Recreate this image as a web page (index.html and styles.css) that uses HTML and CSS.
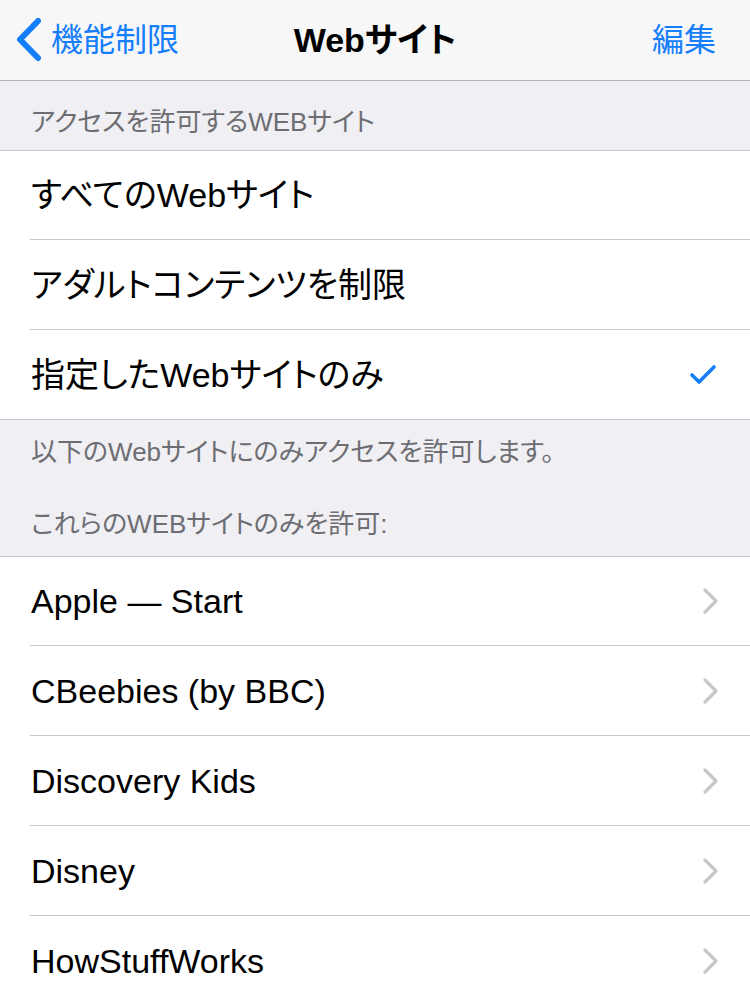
FILE: index.html
```html
<!DOCTYPE html>
<html lang="ja">
<head>
<meta charset="utf-8">
<link rel="stylesheet" href="styles.css">
</head>
<body>
<div class="screen">
  <header class="nav">
    <div class="nav-left">
      <svg class="back-icon" width="28" height="44" viewBox="0 0 28 44"><polyline points="23,3 5,21.5 23,40" fill="none" stroke="#157efb" stroke-width="6" stroke-linecap="round" stroke-linejoin="round"/></svg>
      <span class="nav-link">機能制限</span>
    </div>
    <div class="nav-title">Webサイト</div>
    <div class="nav-right"><span class="nav-link">編集</span></div>
  </header>

  <div class="section-header">アクセスを許可するWEBサイト</div>
  <ul class="group">
    <li class="row row-first"><span class="label">すべてのWebサイト</span></li>
    <li class="row"><span class="label">アダルトコンテンツを制限</span></li>
    <li class="row"><span class="label">指定したWebサイトのみ</span>
      <svg class="check" width="30" height="24" viewBox="0 0 30 24"><polyline points="4,12 11,19 26,4" fill="none" stroke="#157efb" stroke-width="3.6" stroke-linecap="round" stroke-linejoin="round"/></svg>
    </li>
  </ul>
  <div class="section-footer">
    <div class="footer-note">以下のWebサイトにのみアクセスを許可します。</div>
    <div class="footer-header">これらのWEBサイトのみを許可:</div>
  </div>
  <ul class="group">
    <li class="row row-first"><span class="label">Apple — Start</span><svg class="chevron" width="16" height="28" viewBox="0 0 16 28"><polyline points="3,3 14,14 3,25" fill="none" stroke="#c7c7cc" stroke-width="3.2" stroke-linecap="round" stroke-linejoin="round"/></svg></li>
    <li class="row"><span class="label">CBeebies (by BBC)</span><svg class="chevron" width="16" height="28" viewBox="0 0 16 28"><polyline points="3,3 14,14 3,25" fill="none" stroke="#c7c7cc" stroke-width="3.2" stroke-linecap="round" stroke-linejoin="round"/></svg></li>
    <li class="row"><span class="label">Discovery Kids</span><svg class="chevron" width="16" height="28" viewBox="0 0 16 28"><polyline points="3,3 14,14 3,25" fill="none" stroke="#c7c7cc" stroke-width="3.2" stroke-linecap="round" stroke-linejoin="round"/></svg></li>
    <li class="row"><span class="label">Disney</span><svg class="chevron" width="16" height="28" viewBox="0 0 16 28"><polyline points="3,3 14,14 3,25" fill="none" stroke="#c7c7cc" stroke-width="3.2" stroke-linecap="round" stroke-linejoin="round"/></svg></li>
    <li class="row"><span class="label">HowStuffWorks</span><svg class="chevron" width="16" height="28" viewBox="0 0 16 28"><polyline points="3,3 14,14 3,25" fill="none" stroke="#c7c7cc" stroke-width="3.2" stroke-linecap="round" stroke-linejoin="round"/></svg></li>
  </ul>
</div>
</body>
</html>
```

FILE: styles.css
```css
html, body {
  margin: 0;
  padding: 0;
  background: #efeff4;
}
body {
  font-family: "Liberation Sans", "Noto Sans CJK JP", sans-serif;
  font-feature-settings: "palt";
  color: #000;
}
.screen {
  width: 750px;
  height: 1000px;
  overflow: hidden;
  background: #efeff4;
}
.nav {
  height: 80px;
  border-bottom: 1px solid #b2b2b6;
  background: #f7f7f8;
  display: grid;
  grid-template-columns: 1fr auto 1fr;
  align-items: center;
}
.nav-left {
  display: flex;
  align-items: center;
  padding-left: 15px;
  gap: 8px;
}
.back-icon {
  display: block;
}
.nav-link {
  color: #157efb;
  font-size: 32px;
  line-height: 40px;
}
.nav-title {
  font-size: 34px;
  line-height: 40px;
  font-weight: bold;
}
.nav-right {
  display: flex;
  justify-content: flex-end;
  padding-right: 34px;
}
.section-header {
  height: 70px;
  box-sizing: border-box;
  padding: 26px 0 0 31px;
  font-size: 26px;
  line-height: 30px;
  color: #6d6d72;
  border-bottom: 1px solid #c8c7cc;
}
.group {
  list-style: none;
  margin: 0;
  padding: 0;
  background: #fff;
  border-bottom: 1px solid #c8c7cc;
}
.row {
  height: 89px;
  display: flex;
  align-items: center;
  margin-left: 30px;
  padding-right: 32px;
  border-bottom: 1px solid #c8c7cc;
}
.row-first {
  height: 88px;
}
.row:last-child {
  border-bottom: none;
}
.label {
  flex: 1;
  font-size: 34px;
  line-height: 40px;
  padding-left: 1px;
}
.check {
  display: block;
}
.chevron {
  display: block;
}
.section-footer {
  height: 137px;
  box-sizing: border-box;
  padding: 17px 0 0 31px;
  font-size: 26px;
  line-height: 30px;
  color: #6d6d72;
  border-bottom: 1px solid #c8c7cc;
}
.footer-header {
  margin-top: 42px;
}
```
